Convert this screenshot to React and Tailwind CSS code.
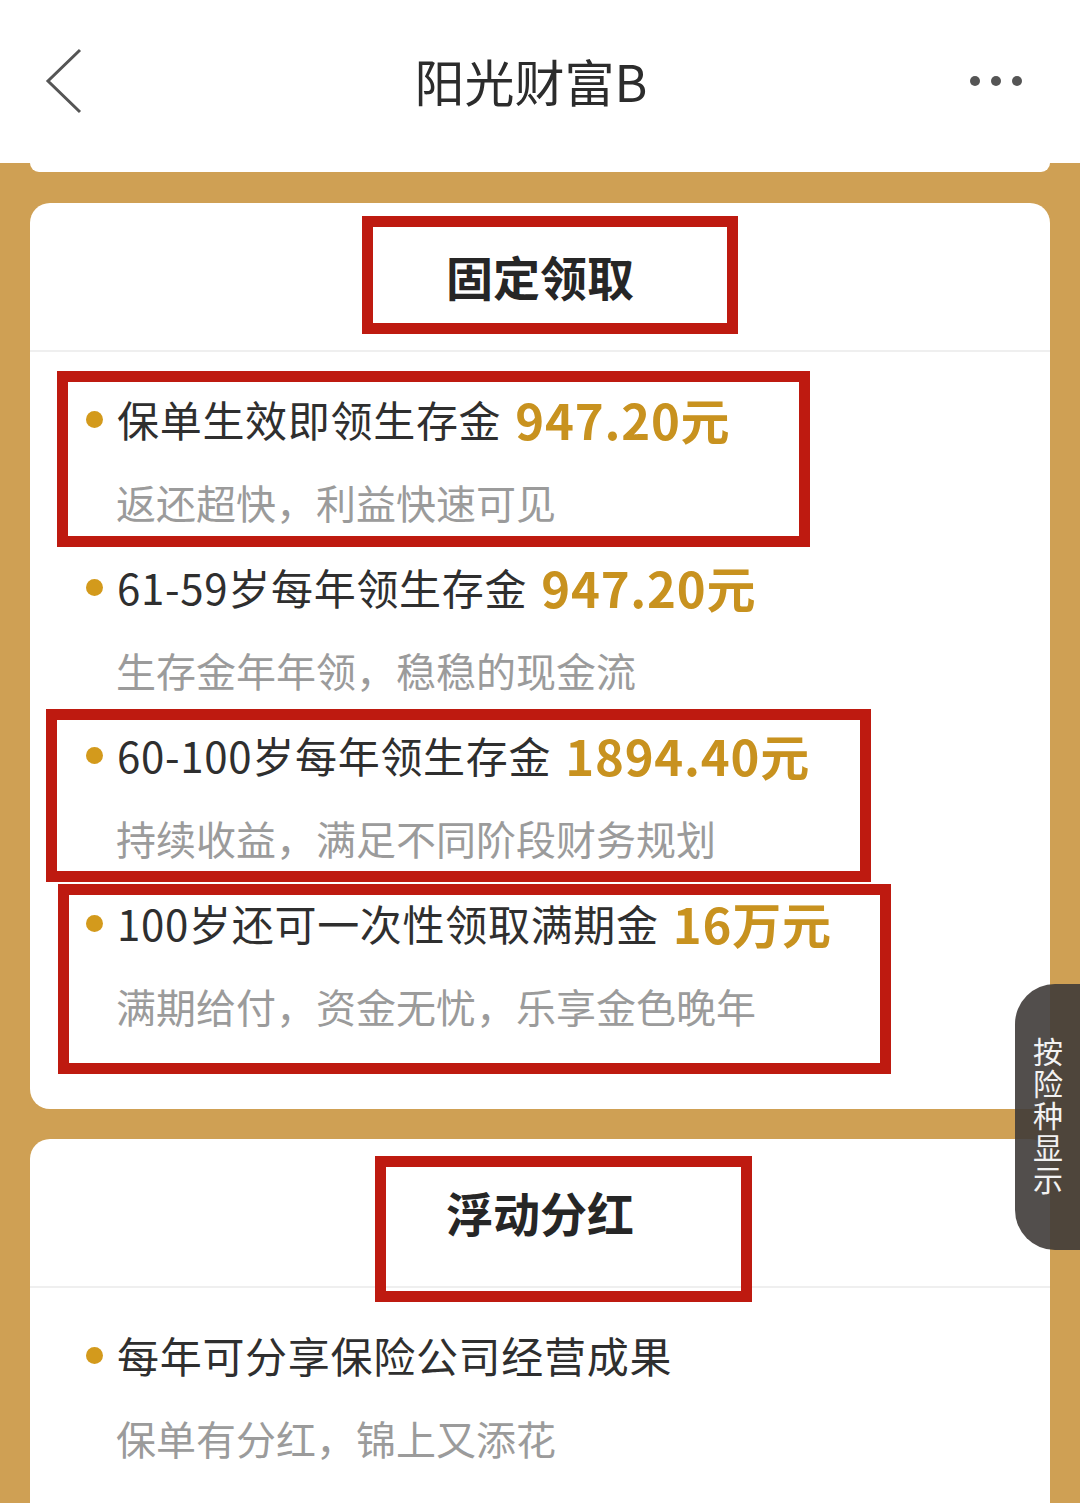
// 阳光财富B - product benefit page

const FONT = { fontFamily: '"Noto Sans CJK SC", "Noto Sans", sans-serif' };

const fixedItems = [
  { text: '保单生效即领生存金', amount: '947.20元', sub: '返还超快，利益快速可见' },
  { text: '61-59岁每年领生存金', amount: '947.20元', sub: '生存金年年领，稳稳的现金流' },
  { text: '60-100岁每年领生存金', amount: '1894.40元', sub: '持续收益，满足不同阶段财务规划' },
  { text: '100岁还可一次性领取满期金', amount: '16万元', sub: '满期给付，资金无忧，乐享金色晚年' },
];

const bonusItems = [{ text: '每年可分享保险公司经营成果', amount: '', sub: '保单有分红，锦上又添花' }];

const Item = ({ item }) => (
  <div className="flex flex-col">
    <div className="flex h-[56px] items-center">
      <span className="ml-[56px] mr-[14px] h-[17px] w-[17px] rounded-full bg-[#d39a1c]" />
      <span className="text-[42px] leading-[56px] tracking-[0.7px] text-[#2f2f2f]">{item.text}</span>
      {item.amount && (
        <span className="ml-[14px] text-[49px] font-bold leading-[56px] tracking-[0.8px] text-[#c8921f]">
          {item.amount}
        </span>
      )}
    </div>
    <div className="mt-[27px] h-[56px] pl-[86px] text-[40px] leading-[56px] text-[#9b9b9b]">{item.sub}</div>
  </div>
);

const Card = ({ title, items, className }) => (
  <div className={`rounded-[20px] bg-white ${className}`}>
    <div className="flex h-[149px] items-center justify-center border-b-2 border-[#efefef]">
      <h2 className="text-[47px] font-semibold text-[#262626]">{title}</h2>
    </div>
    <div className="flex flex-col gap-[29px] pt-[39px]">
      {items.map((item, idx) => (
        <Item key={idx} item={item} />
      ))}
    </div>
  </div>
);

// red annotation frames drawn over the screenshot
const RedBox = ({ className }) => (
  <div className={`pointer-events-none absolute border-[11px] border-[#be1a10] ${className}`} />
);

export default function App() {
  return (
    <div className="relative h-[1503px] w-[1080px] overflow-hidden bg-[#cfa054]" style={FONT}>
      {/* header */}
      <header className="flex h-[163px] items-center justify-between bg-white px-[40px] pb-[2px]">
        <svg width="44" height="66" viewBox="0 0 44 66" className="ml-[2px]">
          <path d="M38 2 L6 33 L38 64" fill="none" stroke="#555" strokeWidth="3" />
        </svg>
        <h1 className="ml-[6px] text-[50px] text-[#2c2c2c]">阳光财富B</h1>
        <div className="flex gap-[11px] pr-[18px]">
          <span className="h-[10px] w-[10px] rounded-full bg-[#555]" />
          <span className="h-[10px] w-[10px] rounded-full bg-[#555]" />
          <span className="h-[10px] w-[10px] rounded-full bg-[#555]" />
        </div>
      </header>
      <div className="mx-[30px] h-[9px] rounded-b-[18px] bg-white" />

      <div className="flex flex-col gap-[30px] px-[30px] pt-[31px]">
        <Card title="固定领取" items={fixedItems} className="pb-[75px]" />
        <Card title="浮动分红" items={bonusItems} className="pb-[80px]" />
      </div>

      <RedBox className="left-[362px] top-[216px] h-[118px] w-[376px]" />
      <RedBox className="left-[57px] top-[371px] h-[176px] w-[753px]" />
      <RedBox className="left-[46px] top-[709px] h-[173px] w-[825px]" />
      <RedBox className="left-[58px] top-[884px] h-[190px] w-[833px]" />
      <RedBox className="left-[375px] top-[1156px] h-[146px] w-[377px]" />

      {/* side tab */}
      <div className="absolute left-[1015px] top-[984px] flex h-[266px] w-[80px] items-center rounded-l-[40px] bg-[#3f3b38]/90 pl-[17px]">
        <span className="text-[30px] leading-[32px] tracking-[2px] text-[#f2f2f2] [text-orientation:upright] [writing-mode:vertical-rl]">
          按险种显示
        </span>
      </div>
    </div>
  );
}
